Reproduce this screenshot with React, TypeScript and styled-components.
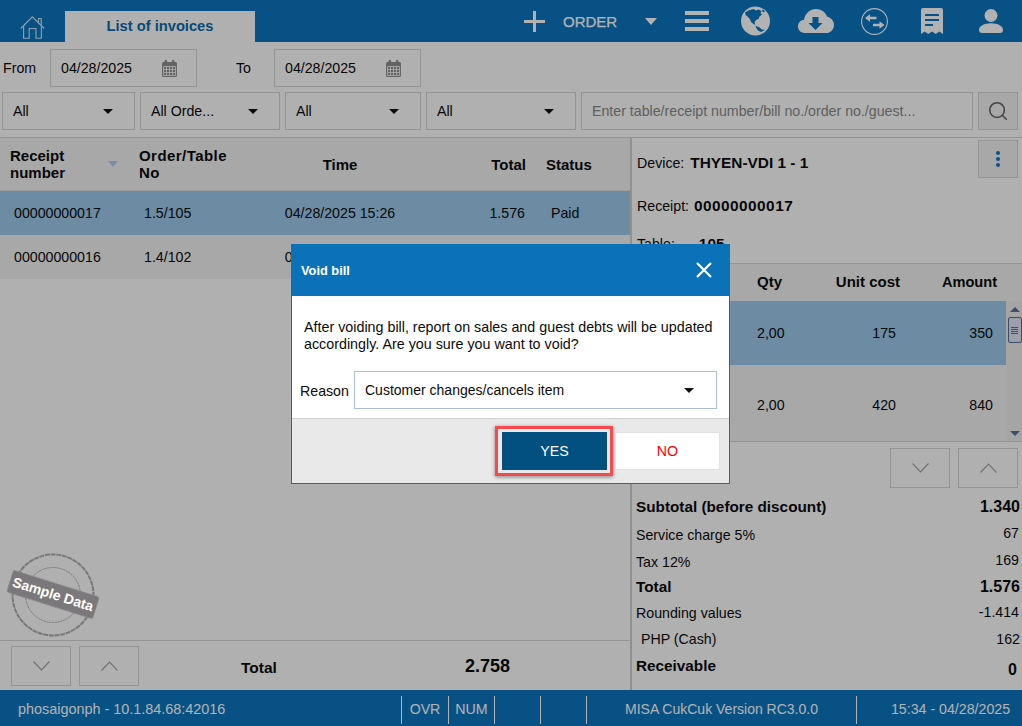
import React from "react";
import styled, { createGlobalStyle } from "styled-components";
import { Search } from "lucide-react";

const Global = createGlobalStyle`
  html, body { margin: 0; padding: 0; background: #fdfdfd; }
  * { box-sizing: border-box; }
  body { font-family: "Liberation Sans", Arial, sans-serif; font-size: 14.2px; color: #0b0b0b; }
`;

const Page = styled.div`
  position: relative;
  width: 1022px;
  height: 726px;
  overflow: hidden;
  display: flex;
  flex-direction: column;
  background: #fdfdfd;
`;

const TopBar = styled.header`
  height: 42px;
  flex: none;
  display: flex;
  background: #0c75bd;
`;
const HomeSlot = styled.div`
  width: 65px;
  display: flex;
  justify-content: center;
  padding-top: 16px;
  padding-right: 1px;
`;
const Tab = styled.div`
  width: 190px;
  margin-top: 11px;
  background: #fdfdfd;
  color: #0c6aab;
  font-weight: 700;
  font-size: 14.7px;
  display: flex;
  align-items: center;
  justify-content: center;
  padding-bottom: 2px;
`;
const Actions = styled.div`
  margin-left: auto;
  padding-right: 19px;
  display: flex;
  align-items: center;
  color: #fff;
`;
const ActionSlot = styled.span<{ $ml: number }>`
  display: flex;
  margin-left: ${(p) => p.$ml}px;
`;
const OrderLabel = styled.span`
  margin-left: 18px;
  width: 55px;
  font-size: 15px;
  font-weight: 400;
  -webkit-text-stroke: 0.25px #fff;
  white-space: nowrap;
`;
const OrderCaret = styled.span`
  margin-left: 27px;
  width: 0;
  height: 0;
  border-left: 6.5px solid transparent;
  border-right: 6.5px solid transparent;
  border-top: 7px solid #fff;
`;

const Toolbar = styled.div`
  flex: none;
  padding: 7px 0 7px 2px;
  display: flex;
  flex-direction: column;
  gap: 5px;
`;
const ToolRow = styled.div`
  display: flex;
  align-items: center;
  height: 38px;
`;
const DateLabel = styled.span<{ $w: number; $ml?: number; $pl?: number }>`
  width: ${(p) => p.$w}px;
  margin-left: ${(p) => p.$ml ?? 0}px;
  padding-left: ${(p) => p.$pl ?? 0}px;
`;
const Field = styled.div`
  height: 38px;
  border: 1px solid #d5d5d5;
  display: flex;
  align-items: center;
`;
const DateField = styled(Field)`
  width: 147px;
  padding: 0 19px 0 10px;
  justify-content: space-between;
`;
const FilterSelect = styled(Field)<{ $w: number }>`
  width: ${(p) => p.$w}px;
  margin-right: 5px;
  padding: 0 21px 0 10px;
  justify-content: space-between;
`;
const Caret = styled.span`
  width: 0;
  height: 0;
  border-left: 5px solid transparent;
  border-right: 5px solid transparent;
  border-top: 5px solid #111;
`;
const SearchField = styled(Field)`
  width: 392px;
  padding-left: 10px;
  color: #888;
  margin-right: 5px;
`;
const SquareButton = styled.button`
  width: 40px;
  height: 38px;
  padding: 0;
  border: 1px solid #d5d5d5;
  background: #f1f1f1;
  display: flex;
  align-items: center;
  justify-content: center;
  color: #757575;
`;

const Main = styled.main`
  flex: 1;
  min-height: 0;
  display: flex;
  border-top: 1px solid #d5d5d5;
`;
const LeftPane = styled.section`
  width: 630px;
  flex: none;
  display: flex;
  flex-direction: column;
`;
const ListHead = styled.div`
  height: 53px;
  flex: none;
  display: grid;
  grid-template-columns: 130px 146px 128px 126px 100px;
  align-items: center;
  background: #f1f1f1;
  border-bottom: 1px solid #dcdcdc;
  font-weight: 700;
  font-size: 15px;
  line-height: 17px;
`;
const Cell = styled.div<{ $align?: string; $pl?: number; $pr?: number }>`
  text-align: ${(p) => p.$align ?? "left"};
  padding-left: ${(p) => p.$pl ?? 0}px;
  padding-right: ${(p) => p.$pr ?? 0}px;
`;
const ReceiptHead = styled(Cell)`
  display: flex;
  align-items: center;
  justify-content: space-between;
`;
const OrderHead = styled(Cell)`
  letter-spacing: 0.45px;
`;
const SortCaret = styled.span`
  width: 0;
  height: 0;
  border-left: 5px solid transparent;
  border-right: 5px solid transparent;
  border-top: 6px solid #a9cdf0;
`;
const ListRow = styled.div<{ $selected?: boolean }>`
  height: 44px;
  flex: none;
  display: grid;
  grid-template-columns: 130px 146px 128px 126px 100px;
  align-items: center;
  background: ${(p) => (p.$selected ? "#9cc8e9" : "#f1f1f1")};
`;
const ListBody = styled.div`
  flex: 1;
`;
const ListFooter = styled.div`
  height: 50px;
  flex: none;
  border-top: 1px solid #d5d5d5;
  display: flex;
  align-items: center;
  padding-left: 11px;
`;
const Pager = styled.div`
  display: flex;
  gap: 8px;
`;
const PagerButton = styled.button`
  width: 60px;
  height: 40px;
  padding: 0;
  border: 1px solid #d5d5d5;
  background: transparent;
  color: #a0a0a0;
  display: flex;
  align-items: center;
  justify-content: center;
`;
const FooterLabel = styled.strong`
  margin-left: 102px;
  width: 224px;
  padding-top: 4px;
  font-size: 15.5px;
`;
const FooterValue = styled.strong`
  font-size: 18px;
  padding-top: 2px;
`;

const RightPane = styled.section`
  flex: 1;
  min-width: 0;
  display: flex;
  flex-direction: column;
  border-left: 2px solid #cfcfcf;
`;
const InfoRow = styled.div<{ $h: number }>`
  height: ${(p) => p.$h}px;
  flex: none;
  display: flex;
  align-items: center;
  padding-left: 5px;
`;
const InfoValue = styled.strong<{ $ml: number; $spacing?: number }>`
  margin-left: ${(p) => p.$ml}px;
  font-size: 15.4px;
  letter-spacing: ${(p) => p.$spacing ?? 0}px;
`;
const MoreButton = styled(SquareButton)`
  margin-left: auto;
  margin-right: 4px;
  align-self: flex-start;
  margin-top: 2px;
  flex-direction: column;
  gap: 2px;
`;
const Dot = styled.span`
  width: 4px;
  height: 4px;
  border-radius: 50%;
  background: #0c75bd;
`;
const ItemHead = styled.div`
  height: 38px;
  flex: none;
  padding-bottom: 2px;
  border-top: 1px solid #d5d5d5;
  background: #f1f1f1;
  display: grid;
  grid-template-columns: 113px 65px 95px 101px;
  align-items: center;
  font-weight: 700;
  font-size: 15px;
`;
const AmountHead = styled(Cell)`
  font-size: 14.6px;
`;
const ItemsArea = styled.div`
  height: 141px;
  flex: none;
  display: flex;
  border-bottom: 1px solid #d5d5d5;
`;
const ItemRows = styled.div`
  width: 374px;
  flex: none;
  background: #f1f1f1;
`;
const ItemRow = styled.div<{ $selected?: boolean; $h: number; $pt?: number }>`
  height: ${(p) => p.$h}px;
  padding-top: ${(p) => p.$pt ?? 0}px;
  display: grid;
  grid-template-columns: 113px 65px 95px 101px;
  align-items: center;
  background: ${(p) => (p.$selected ? "#9cc8e9" : "#f1f1f1")};
`;
const Scrollbar = styled.div`
  flex: 1;
  background: #ececec;
  display: flex;
  flex-direction: column;
  align-items: center;
  padding: 6px 0 5px 1px;
`;
const ScrollArrow = styled.span<{ $up?: boolean }>`
  width: 0;
  height: 0;
  border-left: 5px solid transparent;
  border-right: 5px solid transparent;
  ${(p) => (p.$up ? "border-bottom: 5px solid #5b6f95;" : "border-top: 5px solid #5b6f95; margin-top: auto;")}
`;
const ScrollThumb = styled.div`
  width: 14px;
  height: 26px;
  margin-top: 5px;
  border: 1px solid #566c90;
  border-radius: 2px;
  background: #dde4f2;
  display: flex;
  flex-direction: column;
  align-items: center;
  justify-content: center;
  gap: 1px;
`;
const Grip = styled.span`
  width: 7px;
  height: 1px;
  background: #5b6f95;
`;
const NavRow = styled.div`
  height: 51px;
  flex: none;
  display: flex;
  justify-content: flex-end;
  gap: 8px;
  padding: 6px 4px 5px 0;
`;
const SummaryRow = styled.div<{ $h: number; $bold?: boolean }>`
  height: ${(p) => p.$h}px;
  flex: none;
  display: flex;
  align-items: center;
  justify-content: space-between;
  padding: 0 2px 0 4px;
  font-weight: ${(p) => (p.$bold ? 700 : 400)};
`;
const SummaryLabel = styled.span<{ $pl?: number; $bold?: boolean }>`
  padding-left: ${(p) => p.$pl ?? 0}px;
  font-size: ${(p) => (p.$bold ? "15.3px" : "inherit")};
`;
const SummaryValue = styled.span<{ $lift?: number; $drop?: number; $pr?: number; $bold?: boolean }>`
  padding-bottom: ${(p) => p.$lift ?? 0}px;
  padding-top: ${(p) => p.$drop ?? 0}px;
  padding-right: ${(p) => p.$pr ?? 0}px;
  font-size: ${(p) => (p.$bold ? "16px" : "inherit")};
`;

const StatusBar = styled.footer`
  height: 36px;
  flex: none;
  background: #0c75bd;
  color: #fff;
  display: grid;
  grid-template-columns: 401px 47px 46px 46px 46px 270px 166px;
  padding-top: 6px;
  padding-bottom: 2px;
`;
const StatusCell = styled.div<{ $first?: boolean; $pl?: number; $size?: number }>`
  display: flex;
  align-items: center;
  justify-content: ${(p) => (p.$first ? "flex-start" : "center")};
  padding-left: ${(p) => p.$pl ?? 0}px;
  ${(p) => (p.$first ? "" : "border-left: 1px solid #fff;")}
  ${(p) => (p.$size ? `font-size: ${p.$size}px;` : "")}
  padding-bottom: 2px;
`;

const Scrim = styled.div`
  position: absolute;
  inset: 0;
  background: rgba(0, 0, 0, 0.3);
  display: flex;
  align-items: center;
  justify-content: center;
  padding-top: 2px;
`;
const Dialog = styled.div`
  width: 439px;
  height: 240px;
  border: 1px solid #0b72b9;
  border-top: 0;
  background: #fff;
  display: flex;
  flex-direction: column;
  margin-left: -1px;
`;
const DialogHead = styled.div`
  height: 52px;
  flex: none;
  margin: 0 -1px;
  background: #0b72b9;
  color: #fff;
  display: flex;
  align-items: center;
  justify-content: space-between;
  padding: 0 18px 0 10px;
`;
const DialogTitle = styled.strong`
  font-size: 12.8px;
`;
const DialogBody = styled.div`
  flex: 1;
  padding: 23px 8px 0 12px;
  border-bottom: 1px solid #cfcfcf;
`;
const Message = styled.p`
  margin: 0;
  line-height: 17px;
  font-size: 14.3px;
`;
const ReasonRow = styled.div`
  display: flex;
  align-items: center;
  margin: 18px 4px 0 -4px;
`;
const ReasonLabel = styled.span`
  width: 54px;
  flex: none;
  padding-top: 1px;
`;
const ReasonSelect = styled.div`
  flex: 1;
  height: 38px;
  border: 1px solid #a9c0dd;
  display: flex;
  align-items: center;
  justify-content: space-between;
  padding: 0 22px 0 10px;
  font-size: 14px;
`;
const DialogFooter = styled.div`
  height: 64px;
  flex: none;
  background: #e9e9e9;
  display: flex;
  align-items: center;
  justify-content: flex-end;
  padding-right: 9px;
  gap: 2px;
`;
const Highlight = styled.div`
  padding: 3px 3px 3px 4px;
  border: 3px solid #f44a4e;
  box-shadow: 0 1px 4px rgba(0, 0, 0, 0.45);
`;
const DialogButton = styled.button<{ $primary?: boolean }>`
  width: 105px;
  height: 38px;
  padding: 0;
  display: block;
  font: inherit;
  background: ${(p) => (p.$primary ? "#025080" : "#fff")};
  color: ${(p) => (p.$primary ? "#fff" : "#ff0000")};
  border: ${(p) => (p.$primary ? "0" : "1px solid #e2e2e2")};
`;

const StampMark = styled.svg`
  position: absolute;
  left: 4px;
  top: 549px;
  pointer-events: none;
`;
const StampText = styled.text`
  font-family: "Liberation Sans", Arial, sans-serif;
  font-size: 14px;
  font-weight: 700;
  fill: #fff;
`;

const Home = () => (
  <svg width="25" height="23" viewBox="0 0 25 23" fill="none" stroke="#cfe6f7" strokeWidth="1.1">
    <path d="M0.8 12.5 12.3 0.8 24.2 12.5" />
    <path d="M18.5 6.6V2.5H21.2V9.2" />
    <path d="M3.6 10.5V22.3H9.2V12.5H16V22.3H21.4V10.5" />
  </svg>
);
const Plus = () => (
  <svg width="21" height="21" viewBox="0 0 21 21" fill="#fff">
    <rect x="9" width="3" height="21" />
    <rect y="9" width="21" height="3" />
  </svg>
);
const Burger = () => (
  <svg width="24" height="20" viewBox="0 0 24 20" fill="#fff">
    <rect width="24" height="4" />
    <rect y="8" width="24" height="4" />
    <rect y="16" width="24" height="4" />
  </svg>
);
const Globe = () => (
  <svg width="29" height="30" viewBox="0 0 29 30">
    <circle cx="14.5" cy="15" r="14.5" fill="#fff" />
    <path
      fill="#0c75bd"
      d="M4 6.5 8 4.2 12.5 3 15 4.5 17.5 3.5 20.5 5 19.5 7 21 8.5 18.5 10.5 17.5 13 15 14 13.5 16.5 14.5 19 12.5 18 10 16 9 13 6.5 10.5 5 9.5Z"
    />
    <path fill="#0c75bd" d="M14.5 20 18 21 21 23.5 24 24 20 26 17 24.5 15.5 22.5Z" />
    <path fill="#0c75bd" d="M21.5 3.5 24 5 22.5 6.5 21 5Z" />
  </svg>
);
const Cloud = () => (
  <svg width="36" height="24" viewBox="0 0 36 24">
    <path
      fill="#fff"
      d="M7 24C3 24 0 21.2 0 17.5 0 14 2.5 11.2 6 10.8 7 4.6 12 0 18 0c5 0 9.2 3 11 7.4 3.8 1 7 4.2 7 8.3C36 20.4 32.4 24 28 24Z"
    />
    <path fill="#0c75bd" d="M14.5 8H20.5V14H24.5L17.5 21 10.5 14H14.5Z" />
  </svg>
);
const Exchange = () => (
  <svg width="27" height="27" viewBox="0 0 27 27" fill="none">
    <circle cx="13.5" cy="13.5" r="12.9" stroke="#fff" strokeWidth="1.1" />
    <path fill="#fff" d="M4 10 9 6.2V8.8H15.5V11.2H9V13.8Z" />
    <path fill="#fff" d="M23.5 17 18.5 13.2V15.8H12V18.2H18.5V20.8Z" />
  </svg>
);
const Bill = () => (
  <svg width="22" height="26" viewBox="0 0 22 26">
    <path
      fill="#fff"
      d="M2 0H20A2 2 0 0 1 22 2V26L18.3 23.6 14.7 26 11 23.6 7.3 26 3.7 23.6 0 26V2A2 2 0 0 1 2 0Z"
    />
    <path stroke="#0c75bd" strokeWidth="2" d="M4 7H18M4 12H18M4 17H12" />
  </svg>
);
const User = () => (
  <svg width="24" height="24" viewBox="0 0 24 24" fill="#fff">
    <circle cx="12" cy="6.5" r="6.5" />
    <path d="M0 21C0 17 5 14.2 12 14.2S24 17 24 21C24 23 23 24 21 24H3C1 24 0 23 0 21Z" />
  </svg>
);
const CalendarIcon = () => (
  <svg width="15" height="17" viewBox="0 0 15 17">
    <rect y="2" width="15" height="15" rx="1.5" fill="#8f8f8f" />
    <rect x="2.5" width="2.6" height="4" rx="1" fill="#8f8f8f" />
    <rect x="9.9" width="2.6" height="4" rx="1" fill="#8f8f8f" />
    <path stroke="#fdfdfd" strokeWidth="0.8" fill="none" d="M1.5 6.5H13.5V15.5H1.5ZM1.5 9.5H13.5M1.5 12.5H13.5M4.5 6.5V15.5M7.5 6.5V15.5M10.5 6.5V15.5" />
  </svg>
);
const Chevron = ({ up }: { up?: boolean }) => (
  <svg width="17" height="10" viewBox="0 0 17 10" fill="none" stroke="currentColor" strokeWidth="1.1">
    <path d={up ? "M0.5 9.5 8.5 1 16.5 9.5" : "M0.5 0.5 8.5 9 16.5 0.5"} />
  </svg>
);
const CloseIcon = () => (
  <svg width="16" height="16" viewBox="0 0 16 16" stroke="#fff" strokeWidth="2.2">
    <path d="M1 1 15 15M15 1 1 15" />
  </svg>
);
const Stamp = () => (
  <StampMark width="100" height="92" viewBox="0 0 100 92">
    <circle cx="49" cy="46" r="40.5" fill="none" stroke="#7a787a" strokeWidth="2" strokeDasharray="5 0.7" />
    <circle cx="49" cy="46" r="27.5" fill="none" stroke="#7a787a" strokeWidth="1" strokeDasharray="2 0.8" />
    <g transform="rotate(17.4 49 45.5)">
      <rect x="4" y="34" width="90" height="23" rx="2" fill="#7a787a" stroke="#8e8c8e" strokeDasharray="2 1" />
      <StampText x="49" y="50" textAnchor="middle">Sample Data</StampText>
    </g>
  </StampMark>
);

const filters = [
  { w: 133, label: "All" },
  { w: 140, label: "All Orde..." },
  { w: 136, label: "All" },
  { w: 150, label: "All" },
];
const invoices = [
  { id: "00000000017", table: "1.5/105", time: "04/28/2025 15:26", total: "1.576", status: "Paid", selected: true },
  { id: "00000000016", table: "1.4/102", time: "04/28/2025 15:20", total: "1.182", status: "Paid", selected: false },
];

export default function App() {
  return (
    <Page>
      <Global />
      <TopBar>
        <HomeSlot><Home /></HomeSlot>
        <Tab>List of invoices</Tab>
        <Actions>
          <Plus />
          <OrderLabel>ORDER</OrderLabel>
          <OrderCaret />
          <ActionSlot $ml={28}><Burger /></ActionSlot>
          <ActionSlot $ml={32}><Globe /></ActionSlot>
          <ActionSlot $ml={28}><Cloud /></ActionSlot>
          <ActionSlot $ml={27}><Exchange /></ActionSlot>
          <ActionSlot $ml={33}><Bill /></ActionSlot>
          <ActionSlot $ml={36}><User /></ActionSlot>
        </Actions>
      </TopBar>

      <Toolbar>
        <ToolRow>
          <DateLabel $w={48} $pl={1}>From</DateLabel>
          <DateField>04/28/2025<CalendarIcon /></DateField>
          <DateLabel $w={38} $ml={39}>To</DateLabel>
          <DateField>04/28/2025<CalendarIcon /></DateField>
        </ToolRow>
        <ToolRow>
          {filters.map((f, i) => (
            <FilterSelect key={i} $w={f.w}>{f.label}<Caret /></FilterSelect>
          ))}
          <SearchField>Enter table/receipt number/bill no./order no./guest...</SearchField>
          <SquareButton aria-label="Search"><Search size={22} strokeWidth={1.7} color="#626262" /></SquareButton>
        </ToolRow>
      </Toolbar>

      <Main>
        <LeftPane>
          <ListHead>
            <ReceiptHead $pl={10} $pr={12}>
              <span>Receipt<br />number</span>
              <SortCaret />
            </ReceiptHead>
            <OrderHead $pl={9}>Order/Table<br />No</OrderHead>
            <Cell $align="center">Time</Cell>
            <Cell $align="right" $pr={4}>Total</Cell>
            <Cell $pl={16}>Status</Cell>
          </ListHead>
          {invoices.map((r) => (
            <ListRow key={r.id} $selected={r.selected}>
              <Cell $pl={14}>{r.id}</Cell>
              <Cell $pl={14}>{r.table}</Cell>
              <Cell $align="center">{r.time}</Cell>
              <Cell $align="right" $pr={5}>{r.total}</Cell>
              <Cell $pl={21}>{r.status}</Cell>
            </ListRow>
          ))}
          <ListBody />
          <ListFooter>
            <Pager>
              <PagerButton aria-label="Next"><Chevron /></PagerButton>
              <PagerButton aria-label="Previous"><Chevron up /></PagerButton>
            </Pager>
            <FooterLabel>Total</FooterLabel>
            <FooterValue>2.758</FooterValue>
          </ListFooter>
        </LeftPane>

        <RightPane>
          <InfoRow $h={50}>
            Device:<InfoValue $ml={6}>THYEN-VDI 1 - 1</InfoValue>
            <MoreButton aria-label="More"><Dot /><Dot /><Dot /></MoreButton>
          </InfoRow>
          <InfoRow $h={36}>
            Receipt:<InfoValue $ml={5} $spacing={0.45}>00000000017</InfoValue>
          </InfoRow>
          <InfoRow $h={39}>
            Table:<InfoValue $ml={24}>105</InfoValue>
          </InfoRow>
          <ItemHead>
            <span />
            <Cell $pl={12}>Qty</Cell>
            <Cell $align="right" $pr={5}>Unit cost</Cell>
            <AmountHead $align="right" $pr={9}>Amount</AmountHead>
          </ItemHead>
          <ItemsArea>
            <ItemRows>
              <ItemRow $selected $h={64}>
                <span />
                <Cell $pl={12}>2,00</Cell>
                <Cell $align="right" $pr={9}>175</Cell>
                <Cell $align="right" $pr={13}>350</Cell>
              </ItemRow>
              <ItemRow $h={76} $pt={4}>
                <span />
                <Cell $pl={12}>2,00</Cell>
                <Cell $align="right" $pr={9}>420</Cell>
                <Cell $align="right" $pr={13}>840</Cell>
              </ItemRow>
            </ItemRows>
            <Scrollbar>
              <ScrollArrow $up />
              <ScrollThumb><Grip /><Grip /><Grip /><Grip /></ScrollThumb>
              <ScrollArrow />
            </Scrollbar>
          </ItemsArea>
          <NavRow>
            <PagerButton aria-label="Next item"><Chevron /></PagerButton>
            <PagerButton aria-label="Previous item"><Chevron up /></PagerButton>
          </NavRow>
          <SummaryRow $h={28} $bold><SummaryLabel $bold>Subtotal (before discount)</SummaryLabel><SummaryValue $bold>1.340</SummaryValue></SummaryRow>
          <SummaryRow $h={28}><SummaryLabel>Service charge 5%</SummaryLabel><SummaryValue $lift={4} $pr={1}>67</SummaryValue></SummaryRow>
          <SummaryRow $h={26}><SummaryLabel>Tax 12%</SummaryLabel><SummaryValue $lift={4} $pr={1}>169</SummaryValue></SummaryRow>
          <SummaryRow $h={24} $bold><SummaryLabel $bold>Total</SummaryLabel><SummaryValue $bold>1.576</SummaryValue></SummaryRow>
          <SummaryRow $h={28}><SummaryLabel>Rounding values</SummaryLabel><SummaryValue $lift={2} $pr={1}>-1.414</SummaryValue></SummaryRow>
          <SummaryRow $h={24}><SummaryLabel $pl={5}>PHP (Cash)</SummaryLabel><SummaryValue>162</SummaryValue></SummaryRow>
          <SummaryRow $h={30} $bold><SummaryLabel $bold>Receivable</SummaryLabel><SummaryValue $bold $drop={8} $pr={3}>0</SummaryValue></SummaryRow>
        </RightPane>
      </Main>

      <StatusBar>
        <StatusCell $first $pl={18} $size={14.4}>phosaigonph - 10.1.84.68:42016</StatusCell>
        <StatusCell>OVR</StatusCell>
        <StatusCell>NUM</StatusCell>
        <StatusCell />
        <StatusCell />
        <StatusCell $size={14}>MISA CukCuk Version RC3.0.0</StatusCell>
        <StatusCell $pl={22}>15:34 - 04/28/2025</StatusCell>
      </StatusBar>

      <Scrim>
        <Dialog role="dialog">
          <DialogHead>
            <DialogTitle>Void bill</DialogTitle>
            <CloseIcon />
          </DialogHead>
          <DialogBody>
            <Message>After voiding bill, report on sales and guest debts will be updated accordingly. Are you sure you want to void?</Message>
            <ReasonRow>
              <ReasonLabel>Reason</ReasonLabel>
              <ReasonSelect>Customer changes/cancels item<Caret /></ReasonSelect>
            </ReasonRow>
          </DialogBody>
          <DialogFooter>
            <Highlight><DialogButton $primary>YES</DialogButton></Highlight>
            <DialogButton>NO</DialogButton>
          </DialogFooter>
        </Dialog>
      </Scrim>
      <Stamp />
    </Page>
  );
}
